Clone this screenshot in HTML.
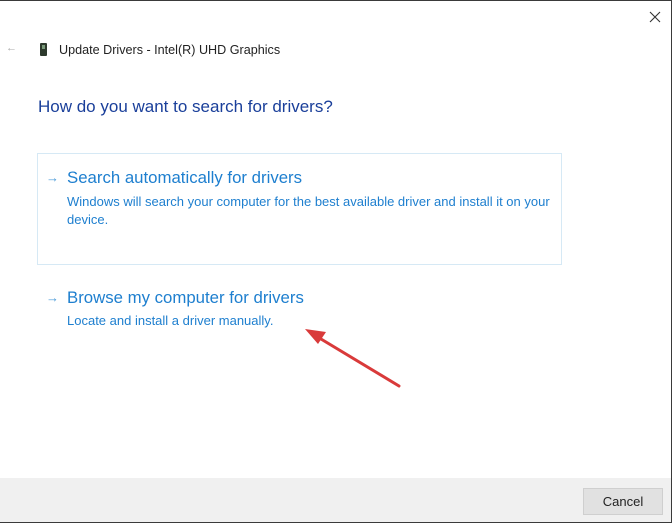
<!DOCTYPE html>
<html><head><style>
body{margin:0;width:672px;height:523px;position:relative;background:#fff;font-family:"Liberation Sans",sans-serif;overflow:hidden}
.b{position:absolute;background:#3a3a3a}
.t{position:absolute;white-space:nowrap}
</style></head><body>
<div class="b" style="left:0;top:0;width:672px;height:1px"></div>
<div class="b" style="right:0;top:0;width:1px;height:523px"></div>
<div class="b" style="left:0;bottom:0;width:672px;height:1px"></div>
<svg style="position:absolute;left:648px;top:10px" width="14" height="14"><path d="M2 2L12 12M12 2L2 12" stroke="#333" stroke-width="1.1"/></svg>
<div class="t" style="left:6px;top:42px;color:#aaa;font-size:11px">←</div>
<div style="position:absolute;left:40px;top:43px;width:7px;height:13px;background:#2d3a2d;border-radius:1px"></div>
<div style="position:absolute;left:42px;top:45px;width:3px;height:4px;background:#7a9a7a"></div>
<div class="t" style="left:59px;top:43px;font-size:12.6px;color:#222">Update Drivers - Intel(R) UHD Graphics</div>
<div class="t" style="left:38px;top:97px;font-size:17px;color:#1a3f9a">How do you want to search for drivers?</div>
<div style="position:absolute;left:37px;top:153px;width:523px;height:110px;border:1px solid #d6e9f5"></div>
<div class="t" style="left:46px;top:170px;font-size:13px;color:#4a9ad8">→</div>
<div class="t" style="left:67px;top:168px;font-size:16.8px;color:#1e7fcf">Search automatically for drivers</div>
<div class="t" style="left:67px;top:193px;font-size:13px;color:#1e7fcf;line-height:18px">Windows will search your computer for the best available driver and install it on your<br>device.</div>
<div class="t" style="left:46px;top:290px;font-size:13px;color:#4a9ad8">→</div>
<div class="t" style="left:67px;top:288px;font-size:16.8px;color:#1e7fcf">Browse my computer for drivers</div>
<div class="t" style="left:67px;top:313px;font-size:13px;color:#1e7fcf">Locate and install a driver manually.</div>
<svg style="position:absolute;left:0;top:0" width="672" height="523"><line x1="399" y1="386" x2="316" y2="336" stroke="#d93a3a" stroke-width="3" stroke-linecap="round"/><path d="M305 329L326 332L318 344Z" fill="#d93a3a"/></svg>
<div style="position:absolute;left:0;top:478px;width:671px;height:44px;background:#f0f0f0"></div>
<div class="t" style="left:583px;top:488px;width:78px;height:25px;border:1px solid #cfcfcf;background:#e1e1e1;font-size:13px;color:#222;text-align:center;line-height:25px">Cancel</div>
</body></html>
